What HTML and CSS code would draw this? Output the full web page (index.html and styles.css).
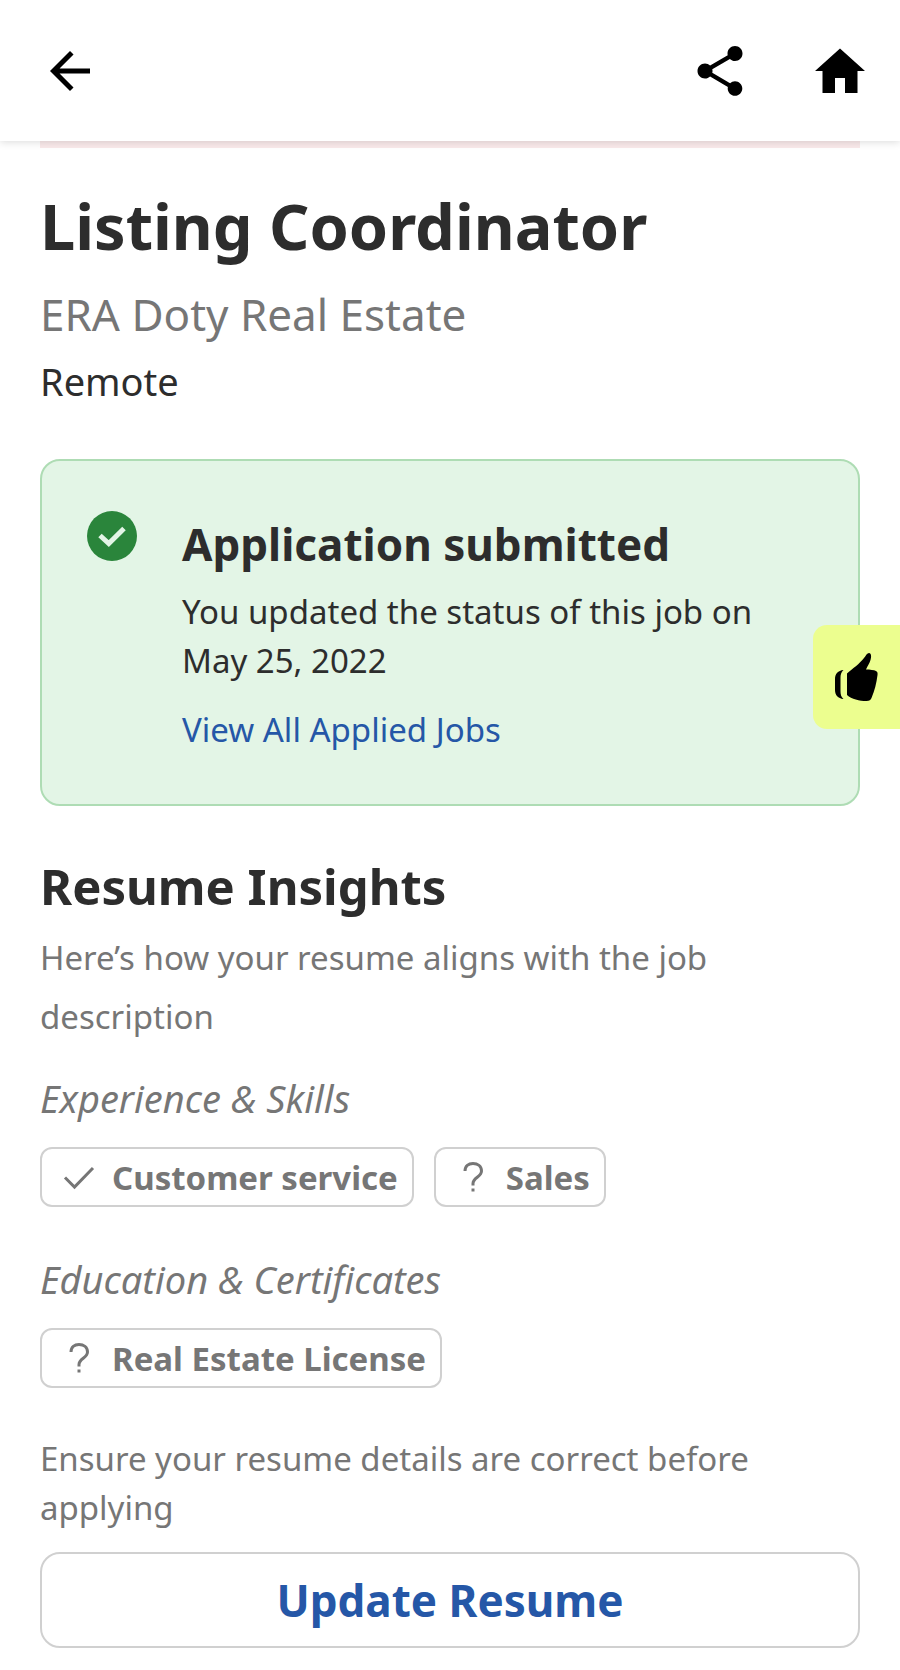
FILE: index.html
```html
<!DOCTYPE html>
<html lang="en">
<head>
    <meta charset="UTF-8">
    <meta name="viewport" content="width=device-width, initial-scale=1.0">
    <title>Listing Coordinator</title>
    <link rel="stylesheet" href="styles.css">
</head>
<body>
    <!-- Top bar -->
    <header class="app-bar">
        <button type="button" class="icon-button" aria-label="Back">
            <svg viewBox="0 0 24 24"><path d="M20 11H7.83l5.59-5.59L12 4l-8 8 8 8 1.41-1.41L7.83 13H20v-2z"/></svg>
        </button>
        <div class="app-bar-actions">
            <button type="button" class="icon-button" aria-label="Share">
                <svg viewBox="0 0 24 24"><path d="M18 16.08c-.76 0-1.44.3-1.96.77L8.91 12.7c.05-.23.09-.46.09-.7s-.04-.47-.09-.7l7.05-4.11c.54.5 1.25.81 2.04.81 1.66 0 3-1.34 3-3s-1.34-3-3-3-3 1.34-3 3c0 .24.04.47.09.7L8.04 9.81C7.5 9.31 6.79 9 6 9c-1.66 0-3 1.34-3 3s1.34 3 3 3c.79 0 1.5-.31 2.04-.81l7.12 4.16c-.05.21-.08.43-.08.65 0 1.61 1.31 2.92 2.92 2.92s2.92-1.31 2.92-2.92-1.31-2.92-2.92-2.92z"/></svg>
            </button>
            <a href="#" class="icon-button" aria-label="Home">
                <svg viewBox="0 0 24 24"><path d="M10 20.8v-6h4v6h5V12h3L12 3 2 12h3v8.800z"/></svg>
            </a>
        </div>
    </header>

    <main>
        <div class="alert-strip"></div>

        <!-- Job heading -->
        <h1>Listing Coordinator</h1>
        <p class="company">ERA Doty Real Estate</p>
        <p class="location">Remote</p>

        <!-- Application status -->
        <section class="status-card">
            <svg class="status-icon" viewBox="0 0 50 50">
                <circle cx="25" cy="25" r="25" fill="#2a853b"/>
                <path d="M13 24.5l8.8 8L37 17.5" fill="none" stroke="#e3f5e6" stroke-width="5"/>
            </svg>
            <div class="status-body">
                <h2>Application submitted</h2>
                <p>You updated the status of this job on May 25, 2022</p>
                <a href="#">View All Applied Jobs</a>
            </div>
        </section>

        <!-- Resume insights -->
        <section class="insights">
            <h2>Resume Insights</h2>
            <p class="intro">Here’s how your resume aligns with the job description</p>

            <h3>Experience &amp; Skills</h3>
            <ul class="chips">
                <li class="chip">
                    <svg viewBox="0 0 36 36"><path d="M5 18.5l9.5 9.5L33 9"/></svg>
                    Customer service
                </li>
                <li class="chip">
                    <svg viewBox="0 0 36 36"><path d="M11 12C11 7 14.500 4.500 19 4.500s8.500 2.500 8.500 7.500c0 6-8.500 6.500-8.500 12.500v2"/><path d="M17.500 31h3"/></svg>
                    Sales
                </li>
            </ul>

            <h3>Education &amp; Certificates</h3>
            <ul class="chips">
                <li class="chip">
                    <svg viewBox="0 0 36 36"><path d="M11 12C11 7 14.500 4.500 19 4.500s8.500 2.500 8.500 7.500c0 6-8.500 6.500-8.500 12.500v2"/><path d="M17.500 31h3"/></svg>
                    Real Estate License
                </li>
            </ul>

            <p class="note">Ensure your resume details are correct before applying</p>
            <button type="button" class="update-button">Update Resume</button>
        </section>
    </main>

    <!-- Floating feedback tab -->
    <button type="button" class="feedback-tab" aria-label="Give feedback">
        <svg viewBox="0 0 44 48">
            <path d="M13 20.500C18 16 26 10.500 30 5c2-2.500 3-5 5-5 2.500 0 2.500 4 1.500 7-1 3.500-3 6-4.500 9.500 4 0 8 .5 10 1.500 1.500.700 1.800 2 1.500 4-1 8-3 16-6 23-.8 2-2 3-5 3-7 0-15-2-19.500-6z"/>
            <path d="M9.500 17C4 17.500 1 21 1 26v11c0 5 3 8.500 8.500 9-2.500-2-3-5-3-8V25c0-3 .5-6 3-8z"/>
        </svg>
    </button>
</body>
</html>
```
FILE: styles.css
```css
:root {
    --text-color: #2d2d2d;
    --muted-color: #767676;
    --link-color: #2557a7;
    --border-color: #d0d0d0;
    --success-bg: #e3f5e6;
    --success-border: #aedcb4;
}

* {
    margin: 0;
    padding: 0;
    box-sizing: border-box;
}

body {
    font-family: "Noto Sans", sans-serif;
    font-size: 33px;
    line-height: 49px;
    color: var(--text-color);
    background: #fff;
}

button {
    font-family: inherit;
    cursor: pointer;
}

a {
    color: var(--link-color);
    text-decoration: none;
}

/* Top bar */
.app-bar {
    position: sticky;
    top: 0;
    z-index: 1;
    display: flex;
    justify-content: space-between;
    align-items: center;
    padding: 41px 30px 40px 40px;
    background: #fff;
    box-shadow: 0 1px 8px rgba(0, 0, 0, 0.15);
}

.app-bar-actions {
    display: flex;
    gap: 60px;
}

.icon-button {
    display: block;
    width: 60px;
    height: 60px;
    border: none;
    background: none;
}

.icon-button svg {
    display: block;
    width: 60px;
    height: 60px;
    fill: #000;
}

main {
    padding: 0 40px 23px;
}

.alert-strip {
    height: 7px;
    background: #f9e9ea;
}

/* Job heading */
h1 {
    margin-top: 38px;
    font-size: 63px;
    line-height: 80px;
}

.company {
    margin-top: 18px;
    font-size: 44px;
    line-height: 60px;
    color: var(--muted-color);
}

.location {
    margin-top: 11px;
    font-size: 38px;
    line-height: 52px;
}

/* Application status */
.status-card {
    display: flex;
    gap: 45px;
    margin-top: 52px;
    padding: 50px 45px;
    background: var(--success-bg);
    border: 2px solid var(--success-border);
    border-radius: 20px;
}

.status-icon {
    flex: none;
    width: 50px;
    height: 50px;
}

.status-body {
    padding-top: 3px;
}

.status-body h2 {
    font-size: 44px;
    line-height: 60px;
}

.status-body p {
    margin-top: 13px;
}

.status-body a {
    display: inline-block;
    margin-top: 20px;
}

/* Resume insights */
.insights h2 {
    margin-top: 48px;
    font-size: 49px;
    line-height: 64px;
}

.intro {
    margin-top: 10px;
    line-height: 59px;
    color: var(--muted-color);
}

h3 {
    margin: 26px 0 23px;
    font-size: 38px;
    font-weight: normal;
    font-style: italic;
    line-height: 52px;
    color: var(--muted-color);
}

.chips {
    display: flex;
    flex-wrap: wrap;
    gap: 20px;
    margin-bottom: 46px;
    list-style: none;
}

.chip {
    display: flex;
    align-items: center;
    gap: 16px;
    height: 60px;
    padding: 0 14px 0 18px;
    font-weight: bold;
    color: var(--muted-color);
    border: 2px solid var(--border-color);
    border-radius: 12px;
}

.chip svg {
    width: 36px;
    height: 36px;
    fill: none;
    stroke: var(--muted-color);
    stroke-width: 3;
}

.note {
    color: var(--muted-color);
}

.update-button {
    display: block;
    width: 100%;
    margin-top: 20px;
    padding: 16px;
    font-size: 44px;
    font-weight: bold;
    line-height: 60px;
    color: var(--link-color);
    background: #fff;
    border: 2px solid var(--border-color);
    border-radius: 20px;
}

/* Floating feedback tab */
.feedback-tab {
    position: fixed;
    top: 625px;
    right: 0;
    z-index: 2;
    padding: 28px 22px 28px 21px;
    background: #ecfe8f;
    border: none;
    border-radius: 14px 0 0 14px;
}

.feedback-tab svg {
    display: block;
    width: 44px;
    height: 48px;
}
```
